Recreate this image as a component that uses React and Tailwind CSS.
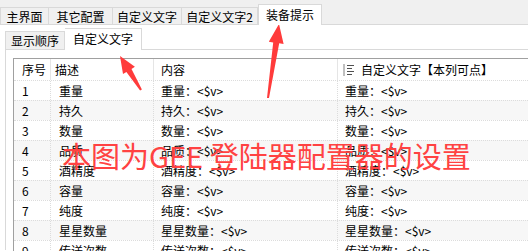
const rows = [
  "重量",
  "持久",
  "数量",
  "品质",
  "酒精度",
  "容量",
  "纯度",
  "星星数量",
  "传送次数",
];

function arrowPoints(tail, tip, headLen, headW, neckW, tailW) {
  const dx = tip[0] - tail[0];
  const dy = tip[1] - tail[1];
  const len = Math.hypot(dx, dy);
  const ux = dx / len;
  const uy = dy / len;
  const px = -uy;
  const py = ux;
  const bx = tip[0] - ux * headLen;
  const by = tip[1] - uy * headLen;
  const pts = [
    tip,
    [bx + px * headW, by + py * headW],
    [bx + px * neckW, by + py * neckW],
    [tail[0] + px * tailW, tail[1] + py * tailW],
    [tail[0] - px * tailW, tail[1] - py * tailW],
    [bx - px * neckW, by - py * neckW],
    [bx - px * headW, by - py * headW],
  ];
  return pts.map((p) => p[0].toFixed(1) + "," + p[1].toFixed(1)).join(" ");
}

function TopTab({ label, width, active }) {
  if (active) {
    return (
      <div
        className="relative z-10 -mb-px flex h-[21px] items-center justify-center border-x border-t border-[#d9d9d9] bg-white"
        style={{ width }}
      >
        {label}
      </div>
    );
  }
  return (
    <div
      className="flex h-[17px] items-center justify-center border-r border-t border-[#d9d9d9] bg-[#f0f0f0] pt-px"
      style={{ width }}
    >
      {label}
    </div>
  );
}

function SortIcon() {
  return (
    <svg width="11" height="12" viewBox="0 0 11 12" className="shrink-0">
      <rect x="0" y="0" width="2" height="12" fill="#c0c0c0" />
      <rect x="4" y="1" width="7" height="1" fill="#505050" />
      <rect x="4" y="4" width="5" height="1" fill="#505050" />
      <rect x="4" y="7" width="7" height="1" fill="#505050" />
      <rect x="4" y="10" width="5" height="1" fill="#505050" />
    </svg>
  );
}

export default function App() {
  return (
    <div className="relative h-[251px] w-[528px] overflow-hidden bg-white text-[12px] leading-none text-black font-['Noto_Sans_CJK_SC','Noto_Sans',sans-serif]">
      {/* main tabs */}
      <div className="flex h-[25px] items-end border-b border-[#d9d9d9] bg-[#f0f0f0]">
        <div className="flex h-[17px] w-[49px] items-center justify-center border-x border-t border-[#d9d9d9] pt-px">
          主界面
        </div>
        <TopTab label="其它配置" width={64} />
        <TopTab label="自定义文字" width={69} />
        <TopTab label="自定义文字2" width={76} />
        <TopTab label="装备提示" width={64} active />
      </div>

      <div className="ml-[5px]">
        {/* sub tabs */}
        <div className="flex h-[25px] items-end border-b border-[#d9d9d9]">
          <div className="flex h-[18px] w-[60px] items-center justify-center border-x border-t border-[#d9d9d9] bg-[#f0f0f0] pt-px">
            显示顺序
          </div>
          <div className="relative z-10 -mb-px flex h-[22px] w-[77px] items-center justify-center border-r border-t border-[#d9d9d9] bg-white pb-px">
            自定义文字
          </div>
        </div>

        {/* list */}
        <div className="h-[200px] border-l border-[#d9d9d9] pl-[7px] pt-[8px]">
          <div className="border-l border-t border-[#a0a0a0]">
            <div className="flex h-[21px] items-center">
              <div className="flex h-full w-[37px] items-center border-r border-[#e5e5e5] pl-[8px]">
                序号
              </div>
              <div className="flex h-full w-[103px] items-center border-r border-[#e5e5e5] pl-[4px]">
                描述
              </div>
              <div className="flex h-full w-[184px] items-center border-r border-[#e5e5e5] pl-[7px]">
                内容
              </div>
              <div className="flex h-full flex-1 items-center gap-[7px] pl-[5px]">
                <SortIcon />
                <span>自定义文字【本列可点】</span>
              </div>
            </div>
            {rows.map((name, i) => (
              <div
                key={name}
                className={
                  "flex h-[20px] items-center border-t border-dotted border-[#dcdcdc] " +
                  (i % 2 === 1 ? "bg-[#f7f7f7]" : "bg-white")
                }
              >
                <div className="flex h-full w-[37px] items-center border-r border-dotted border-[#dcdcdc] pl-[8px]">
                  {i + 1}
                </div>
                <div className="flex h-full w-[103px] items-center border-r border-dotted border-[#dcdcdc] pl-[8px]">
                  {name}
                </div>
                <div className="flex h-full w-[184px] items-center border-r border-dotted border-[#dcdcdc] pl-[7px] whitespace-nowrap">
                  {name}：&lt;$v&gt;
                </div>
                <div className="flex h-full flex-1 items-center pl-[7px] whitespace-nowrap">
                  {name}：&lt;$v&gt;
                </div>
              </div>
            ))}
          </div>
        </div>
      </div>

      {/* annotation */}
      <div className="pointer-events-none absolute left-[62px] top-[141px] whitespace-nowrap text-[29px] leading-none text-[#ff4242]">
        本图为GEE 登陆器配置器的设置
      </div>
      <svg
        className="pointer-events-none absolute inset-0"
        width="528"
        height="251"
        viewBox="0 0 528 251"
      >
        <polygon
          points={arrowPoints([268, 98], [279, 24], 19, 7.5, 3, 1)}
          fill="#ff3b3b"
        />
        <polygon
          points={arrowPoints([141, 90], [120, 56], 17, 7, 3, 1)}
          fill="#ff3b3b"
        />
      </svg>
    </div>
  );
}
